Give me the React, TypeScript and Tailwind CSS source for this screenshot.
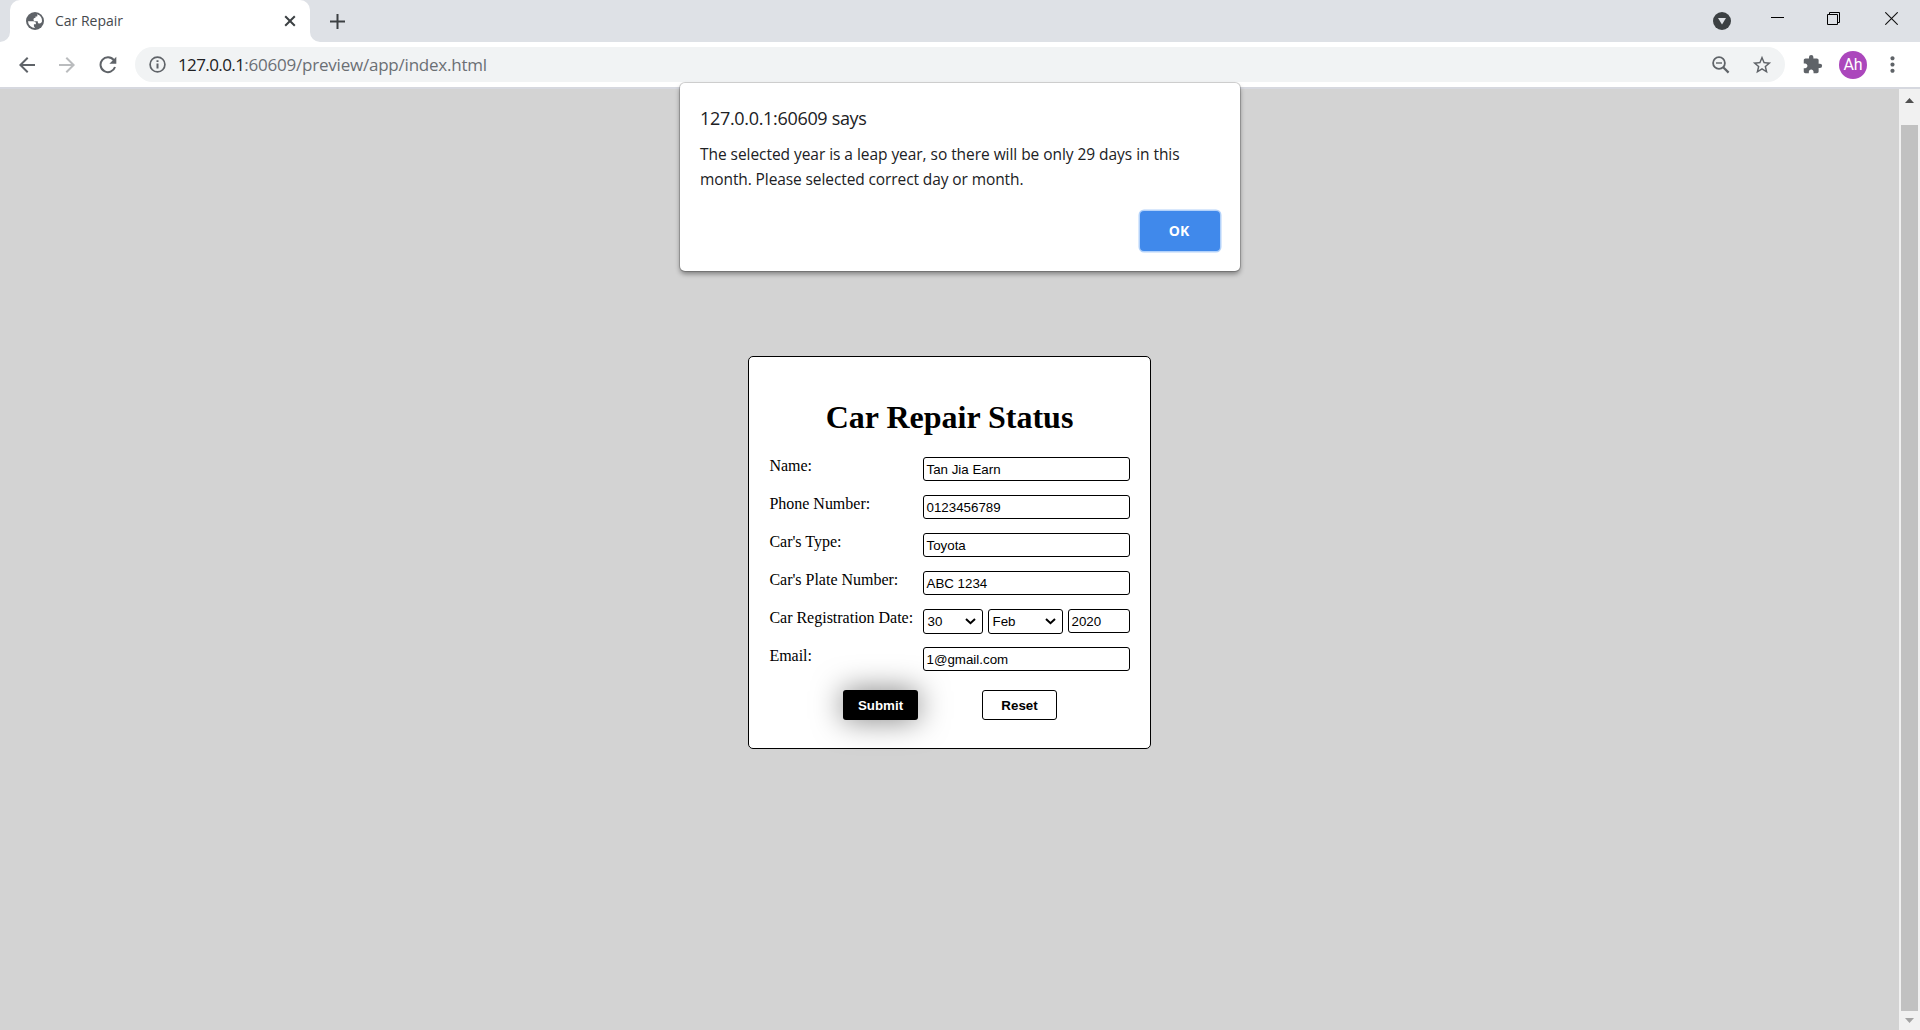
import type { ReactNode } from "react";
import { MdArrowBack, MdArrowForward, MdExtension, MdMoreVert, MdStarBorder } from "react-icons/md";

function GlobeIcon() {
  return (
    <svg className="ml-[2px]" width="18" height="18" viewBox="0 0 18 18">
      <circle cx="9" cy="9" r="9" fill="#5f6368" />
      <path d="M2 9.2h5.2c1.8 0 2.7.8 2.7 2.1v.9h-2v2.1l1.2 1.8A7.1 7.1 0 0 1 2 9.2Z" fill="#fff" />
      <path d="M11 2.2a7.1 7.1 0 0 1 5 7.4c-.5 1.3-1.3 1.9-2.5 1.9-1.3 0-1.8-.8-1.8-2.3H9.1c-1 0-1.6-.6-1.6-1.5 0-1.2.8-1.9 2-1.9V4.5h1.2c.7 0 1-.9.3-2.3Z" fill="#fff" />
    </svg>
  );
}

function TabStrip() {
  return (
    <div className="flex h-[42px] shrink-0 items-center bg-[#dee1e6]">
      <div className="relative ml-[10px] flex h-full w-[300px] items-center rounded-t-[10px] bg-white pr-[14px] pl-[14px]">
        <svg className="absolute bottom-0 -left-[10px]" width="10" height="10">
          <path d="M10 0v10H0A10 10 0 0 0 10 0Z" fill="#fff" />
        </svg>
        <svg className="absolute -right-[10px] bottom-0" width="10" height="10">
          <path d="M0 0v10h10A10 10 0 0 1 0 0Z" fill="#fff" />
        </svg>
        <GlobeIcon />
        <span className="ml-[11px] text-[14px] leading-5 text-[#45494d]">Car Repair</span>
        <svg className="ml-auto" width="12" height="12" viewBox="0 0 12 12" fill="none" stroke="#3c4043" strokeWidth="2">
          <path d="M1.2 1.2l9.6 9.6M10.8 1.2l-9.6 9.6" />
        </svg>
      </div>
      <svg className="ml-5" width="15" height="15" viewBox="0 0 15 15" fill="none" stroke="#3c4043" strokeWidth="2">
        <path d="M7.5 0v15M0 7.5h15" />
      </svg>
      <div className="mr-[22px] ml-auto flex items-center">
        <svg className="mr-[40px]" width="18" height="18" viewBox="0 0 18 18">
          <circle cx="9" cy="9" r="9" fill="#3c4043" />
          <path d="M5 6h8L9 12.5Z" fill="#dee1e6" />
        </svg>
        <svg className="mr-[43px] -mt-2" width="13" height="1">
          <path d="M0 .5h13" stroke="#000" />
        </svg>
        <svg className="mr-[45px] -mt-[5px]" width="13" height="13" viewBox="0 0 13 13" fill="none" stroke="#000">
          <path d="M.5 2.5h10v10H.5ZM2.5 2.5v-2h10v10h-2" />
        </svg>
        <svg className="-mt-[6px]" width="13" height="13" viewBox="0 0 13 13" fill="none" stroke="#111" strokeWidth="1.1">
          <path d="M.3.3l12.4 12.4M12.7.3L.3 12.7" />
        </svg>
      </div>
    </div>
  );
}

function Toolbar() {
  return (
    <div className="flex h-[45px] shrink-0 items-center bg-white text-[#5f6368]">
      <MdArrowBack className="ml-[15px] size-6" />
      <MdArrowForward className="ml-4 size-6 text-[#babcbe]" />
      <svg className="ml-5" width="18" height="18" viewBox="0 0 18 18" fill="none" stroke="#5f6368" strokeWidth="2">
        <path d="M14.8 4.2A7.4 7.4 0 1 0 16 11" />
        <path d="M17.3.8v6.9h-6.9Z" fill="#5f6368" stroke="none" />
      </svg>
      <div className="ml-[18px] flex h-[35px] w-[1650px] items-center rounded-full bg-[#f1f3f4] pl-[14px]">
        <svg width="17" height="17" viewBox="0 0 17 17" fill="none" stroke="#5f6368" strokeWidth="1.7">
          <circle cx="8.5" cy="8.5" r="7.4" />
          <path d="M8.5 7.5v5M8.5 4.3V6" strokeWidth="2" />
        </svg>
        <span className="ml-[12px] text-[17px] leading-6">
          <span className="tracking-[-0.6px] text-[#202124]">127.0.0.1</span>
          <span className="tracking-[-0.22px] text-[#6b6f74]">:60609/preview/app/index.html</span>
        </span>
        <svg className="mr-[21px] ml-auto" width="18" height="18" viewBox="0 0 18 18" fill="none" stroke="#5f6368" strokeWidth="1.8">
          <circle cx="7" cy="7" r="5.9" />
          <path d="M11.2 11.2l5.4 5.4" strokeWidth="2.2" />
          <path d="M4 7h6" strokeWidth="1.4" />
        </svg>
        <MdStarBorder className="mr-[12px] size-[22px]" />
      </div>
      <MdExtension className="ml-[17px] size-[21px]" />
      <div className="mt-px ml-4 flex size-7 items-center justify-center rounded-full bg-[#ab47bc] font-['Roboto',sans-serif] text-[16px] leading-none text-white">
        Ah
      </div>
      <MdMoreVert className="ml-[13px] size-[25px]" />
    </div>
  );
}

function Scrollbar() {
  return (
    <div className="flex w-[21px] flex-col items-center bg-[#f1f1f1]">
      <svg className="mt-[9px]" width="9" height="5">
        <path d="M0 5L4.5 0 9 5Z" fill="#505050" />
      </svg>
      <div className="mt-[22px] mb-[7px] w-[17px] flex-1 bg-[#c1c1c1]" />
      <svg className="mb-[7px]" width="9" height="5">
        <path d="M0 0h9L4.5 5Z" fill="#a3a3a3" />
      </svg>
    </div>
  );
}

const box = "flex h-6 items-center rounded-[3px] border border-black bg-white pt-px pl-[2.5px] leading-[15px]";

function Field({ children }: { children: ReactNode }) {
  return <div className={`${box} w-[207px]`}>{children}</div>;
}

function Select({ className, children }: { className: string; children: ReactNode }) {
  return (
    <div className={`flex h-[25px] items-center justify-between rounded-[3px] border border-black bg-white pr-[6px] pl-[3.5px] ${className}`}>
      {children}
      <svg width="11" height="7" viewBox="0 0 11 7" fill="none" stroke="#000" strokeWidth="2">
        <path d="M1 1l4.5 4.2L10 1" />
      </svg>
    </div>
  );
}

function Row({ label, children }: { label: string; children: ReactNode }) {
  return (
    <div className="flex h-[38px] items-start justify-between">
      <span className="font-['Liberation_Serif',serif] text-[16px] leading-[18px] tracking-[-0.01px]">{label}</span>
      {children}
    </div>
  );
}

function RepairForm() {
  return (
    <div className="ml-[748px] mt-[267px] h-[393px] w-[403px] rounded-[5px] border border-black bg-white pr-5 pl-5 pt-[42px] font-['Liberation_Sans',sans-serif] text-[13.33px] leading-4 text-black">
      <h1 className="mb-[21px] text-center font-['Liberation_Serif',serif] text-[32px] leading-[37px] font-bold">
        Car Repair Status
      </h1>
      <div className="pl-[0.4px]">
        <Row label="Name:"><Field>Tan Jia Earn</Field></Row>
        <Row label="Phone Number:"><Field>0123456789</Field></Row>
        <Row label="Car's Type:"><Field>Toyota</Field></Row>
        <Row label="Car's Plate Number:"><Field>ABC 1234</Field></Row>
        <Row label="Car Registration Date:">
          <div className="flex items-start gap-[5px]">
            <Select className="w-[60px]">30</Select>
            <Select className="w-[75px]">Feb</Select>
            <div className={`${box} w-[62px]`}>2020</div>
          </div>
        </Row>
        <Row label="Email:"><Field>1@gmail.com</Field></Row>
      </div>
      <div className="mt-[5px] ml-[74px] flex gap-16">
        <button className="h-[30px] w-[75px] rounded-[3px] bg-black pt-px font-bold text-white shadow-[0_0_30px_rgba(0,0,0,0.5)]">Submit</button>
        <button className="h-[30px] w-[75px] rounded-[3px] border border-black bg-white pt-px font-bold">Reset</button>
      </div>
    </div>
  );
}

function AlertDialog() {
  return (
    <div className="absolute top-[83px] left-[680px] h-[188px] w-[560px] rounded-[5px] bg-white pt-[23px] pr-5 pl-[20px] text-[#202124] shadow-[0_0_0_1px_rgba(0,0,0,0.17),0_3px_5px_rgba(0,0,0,0.4)]">
      <p className="text-[18px] leading-6 tracking-[-0.32px]">127.0.0.1:60609 says</p>
      <p className="mt-[12px] text-[15.5px] leading-[25px] tracking-[-0.05px] whitespace-nowrap">
        The selected year is a leap year, so there will be only 29 days in this
        <br />
        <span className="tracking-[-0.1px]">month. Please selected correct day or month.</span>
      </p>
      <button className="mt-[19px] ml-auto block h-10 w-20 rounded-[4px] bg-[#4089eb] pr-[2px] pb-[2px] text-[14px] font-bold text-white shadow-[0_0_0_1.5px_#b3d2fa]">OK</button>
    </div>
  );
}

export default function App() {
  return (
    <div className="relative flex h-[1030px] w-[1920px] flex-col overflow-hidden bg-[#d3d3d3] font-['Open_Sans','Noto_Sans',sans-serif]">
      <TabStrip />
      <Toolbar />
      <div className="h-[2px] shrink-0 bg-[#d6d8df]" />
      <div className="flex min-h-0 flex-1 justify-between">
        <RepairForm />
        <Scrollbar />
      </div>
      <AlertDialog />
    </div>
  );
}
